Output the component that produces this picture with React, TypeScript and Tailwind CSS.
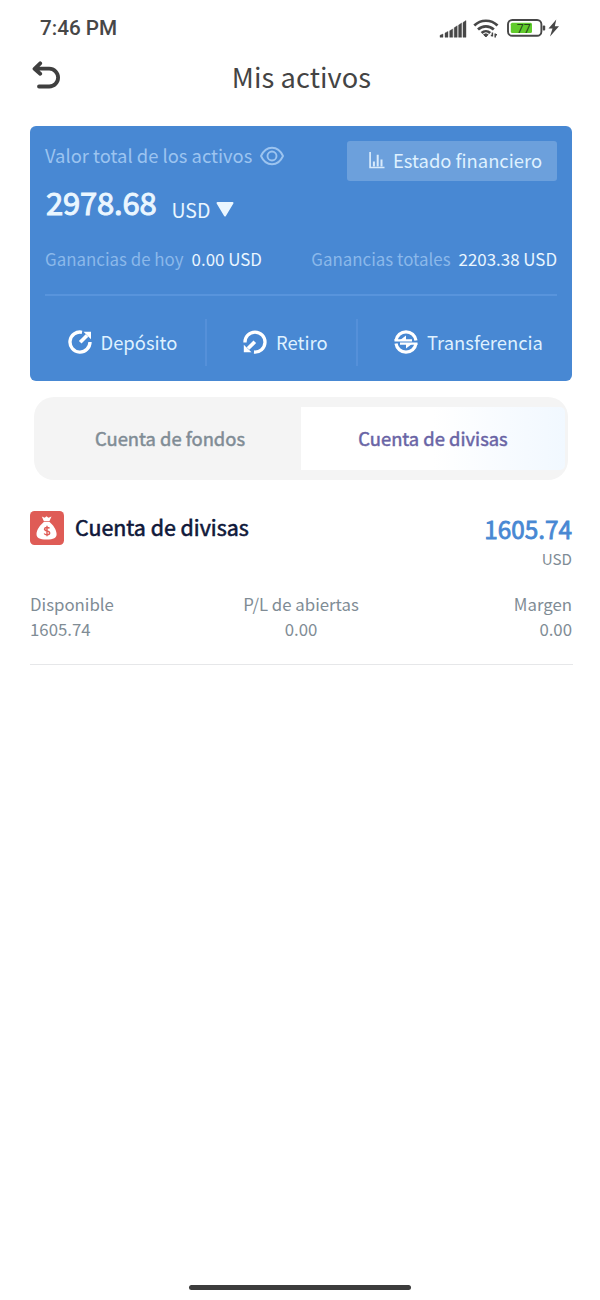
import React from "react";

function StatusIcons() {
  return (
    <svg width="122" height="24" viewBox="0 0 122 24" className="block">
      <path d="M1 20.300l3-1.300v3.300H1zM6 18l3-1.600v5.900H6zM10.700 15.800l3-1.800v8.300h-3zM15.200 12.800l3-2v11.500h-3zM19.600 10l3-2v14.300h-3zM24 7.500l3-2v16.800h-3z" fill="#474747" stroke="#474747" strokeWidth=".4" />
      <g fill="none" stroke="#474747" strokeWidth="2.700">
        <path d="M35.3 10.500a16.5 16.5 0 0 1 23.2 0" />
        <path d="M39 14.500a11.3 11.3 0 0 1 15.8 0" />
        <path d="M42.6 17.900a6.4 6.4 0 0 1 8.6 0" />
      </g>
      <path d="M44.6 19.600q2.3-1.500 4.500 0l-2.200 2.400z" fill="#474747" stroke="#474747" />
      <path d="M53.4 17.600v4M56.2 18.600v4M51.8 20.400h1.6M56.2 19.800h1.8" stroke="#474747" strokeWidth="1.5" />
      <rect x="69" y="5" width="33.4" height="15.8" rx="4.3" fill="none" stroke="#474747" strokeWidth="1.9" />
      <rect x="71.8" y="7.8" width="21.2" height="10.2" rx="1.5" fill="#61cb2c" />
      <rect x="103.7" y="10.500" width="2.500" height="5" rx="1" fill="#474747" />
      <text x="77.7" y="17.500" fontSize="12.5" fontWeight="400" fontFamily="Roboto, sans-serif" fill="#24451b" textLength="14">77</text>
      <path d="M117.300 4.500l-7.800 9h4l-2.500 8 9-10.200h-4.200z" fill="#474747" />
    </svg>
  );
}

function BackIcon() {
  return (
    <svg width="30" height="30" viewBox="0 0 30 30" className="block" fill="none" stroke="#3f3f3f" strokeWidth="3.8" strokeLinecap="round" strokeLinejoin="round">
      <path d="M9.200 2.300L3.500 7.800l5.700 5M4.200 7.700h14a8.900 8.900 0 0 1 0 17.800H8" />
    </svg>
  );
}

function EyeIcon() {
  return (
    <svg width="24" height="20" viewBox="0 0 24 20" className="block" fill="none" stroke="#9cc4f0" strokeWidth="1.9">
      <path d="M1 10C3.500 4.500 7.500 1.700 12 1.700S20.500 4.500 23 10C20.500 15.500 16.500 18.300 12 18.300S3.500 15.500 1 10z" strokeLinejoin="round" />
      <circle cx="12" cy="10" r="4.500" />
    </svg>
  );
}

function ChartIcon() {
  return (
    <svg width="16" height="17" viewBox="0 0 16 17" className="block" fill="none" stroke="#d8eafb">
      <path d="M1.100 0v15.500h14.400" strokeWidth="1.700" />
      <path d="M4.900 9.500v5M8.700 2.800v11.700M12.500 7.500v7" strokeWidth="2" />
    </svg>
  );
}

function DepositIcon() {
  return (
    <svg width="24" height="24" viewBox="0 0 24 24" className="block" fill="none" stroke="#fff">
      <path d="M14 2.300A10 10 0 1 0 22 12" strokeWidth="3.400" />
      <path d="M12.200 12.200l6.800-6.700" strokeWidth="3.700" />
      <path d="M15.500 1.800H23v7.500z" fill="#fff" stroke="none" />
    </svg>
  );
}

function WithdrawIcon() {
  return (
    <svg width="24" height="24" viewBox="0 0 24 24" className="block" fill="none" stroke="#fff">
      <path d="M2 12.500A10 10 0 1 1 11 22" strokeWidth="3.300" />
      <path d="M11.800 11.800l-6.800 6.700" strokeWidth="3.700" />
      <path d="M8.500 22.200H.8v-7.500z" fill="#fff" stroke="none" />
    </svg>
  );
}

function TransferIcon() {
  return (
    <svg width="24" height="24" viewBox="0 0 24 24" className="block" fill="none" stroke="#fff">
      <path d="M2 10.500A10.100 10.100 0 0 1 22 10.500M2 13.500A10.100 10.100 0 0 0 22 13.500" strokeWidth="3.200" />
      <path d="M.5 10.300h17.500M6 13.700h17.500" strokeWidth="2.200" />
      <path d="M5.500 10.500L12 5.500v5zM18.500 13.500L12 18.500v-5z" fill="#fff" stroke="none" />
    </svg>
  );
}

function MoneyBag() {
  return (
    <svg width="34" height="34" viewBox="0 0 34 34" className="block shrink-0">
      <rect width="34" height="34" rx="4.500" fill="#df5c56" />
      <path d="M11.800 5.600l2.900 1.100 1.800-1.500 1.900 1.500 3.100-1.200-2.100 4.700h-5.500z" fill="#fff" />
      <path d="M13.800 10.900h5.800c3.300 2.800 7 7.500 7 12.200 0 4.100-2.900 5.500-10 5.500S6.500 27.200 6.500 23.100c0-4.700 4-9.400 7.300-12.200z" fill="#fff" />
      <path d="M19.500 17.400c-.6-1.100-4.800-1.500-5 .6-.2 2.500 5.200 1.300 5.200 4 0 2.200-4.500 2.200-5.500.5M17 14.800v10.500" fill="none" stroke="#df5c56" strokeWidth="1.400" />
    </svg>
  );
}

const stats = [
  { label: "Disponible", value: "1605.74", align: "text-left" },
  { label: "P/L de abiertas", value: "0.00", align: "text-center" },
  { label: "Margen", value: "0.00", align: "text-right" },
];

export default function App() {
  return (
    <div className="flex h-[1300px] w-[600px] flex-col overflow-hidden bg-white whitespace-nowrap font-['Noto_Sans_CJK_SC','Noto_Sans',sans-serif]">
      <div className="flex h-[54px] shrink-0 items-center justify-between pr-[39px] pl-10">
        <span className="pt-[2px] font-[Roboto,sans-serif] text-[20.700px] leading-none font-medium text-[#474747]">7:46 PM</span>
        <StatusIcons />
      </div>

      <header className="grid h-[43px] shrink-0 grid-cols-[1fr_auto_1fr] items-center pr-[28px] pl-[31px]">
        <BackIcon />
        <h1 className="text-[27.200px] leading-[40px] tracking-[0.1px] text-[#444]">Mis activos</h1>
      </header>

      <section className="mt-[28.5px] ml-[30px] flex h-[255.500px] w-[542px] shrink-0 flex-col rounded-[6px] bg-[#4888d3] px-[15px] pt-[15px]">
        <div className="flex h-[74px] justify-between">
          <div>
            <div className="flex h-[30px] items-center gap-[8px]">
              <span className="pb-[2px] text-[18.400px] leading-[28px] text-[#9cc4f0]">Valor total de los activos</span>
              <EyeIcon />
            </div>
            <div className="flex h-[44px] items-baseline pt-[7px] pl-px text-[#eaf6ff]">
              <span className="text-[31px] leading-[48px] tracking-[-0.2px] [-webkit-text-stroke:1px_#eaf6ff]">2978.68</span>
              <div className="ml-[15px] flex translate-y-[2px] items-baseline">
                <span className="translate-y-px text-[19.500px] leading-[30px]">USD</span>
                <svg width="18" height="15" viewBox="0 0 18 15" className="ml-[6px] block">
                  <path d="M1.500 1h15L9 13.500z" fill="#eaf6ff" stroke="#eaf6ff" strokeWidth="2" strokeLinejoin="round" />
                </svg>
              </div>
            </div>
          </div>
          <button className="flex h-[40px] w-[210px] items-center rounded-[3px] bg-[#6ca0dc] pl-[22px] text-[18.400px] leading-[38px] text-[#dff1ff]">
            <ChartIcon />
            <span className="ml-[8px] pb-px">Estado financiero</span>
          </button>
        </div>

        <div className="mt-[29px] flex h-[30px] items-center justify-between pt-px text-[16.900px] leading-[30px] text-[#eaf6ff]">
          <span><span className="mr-[8px] text-[#8bb8ea]">Ganancias de hoy</span>0.00 USD</span>
          <span><span className="mr-[8px] text-[#8bb8ea]">Ganancias totales</span>2203.38 USD</span>
        </div>

        <div className="mt-[20px] h-[2px] shrink-0 bg-[#5894dc]" />

        <div className="-mx-[15px] mt-[23px] flex h-[47px] items-center text-[18.400px] leading-[46px] text-[#dff1ff]">
          <div className="flex h-full w-[177px] items-center gap-[8.500px] border-r-2 border-[#5590d9] pl-[38px]"><DepositIcon /><span>Depósito</span></div>
          <div className="flex h-full w-[151px] items-center gap-[9px] border-r-2 border-[#5590d9] pl-[36px]"><WithdrawIcon /><span>Retiro</span></div>
          <div className="flex h-full items-center gap-[9px] pl-[36px]"><TransferIcon /><span>Transferencia</span></div>
        </div>
      </section>

      <div className="mt-[16px] ml-[34px] flex h-[83px] w-[534px] shrink-0 items-center overflow-hidden rounded-[20px] bg-[#f4f4f4] pr-[3px] text-[18.400px]">
        <div className="flex h-[63px] w-[267px] items-center justify-center pl-[5px] text-[#808c95] [-webkit-text-stroke:0.5px_#808c95]">Cuenta de fondos</div>
        <div className="flex h-[63px] w-[264px] items-center justify-center rounded-r-[5px] bg-gradient-to-r from-white from-50% to-[#f1f8ff] text-[#6964a5] [-webkit-text-stroke:0.5px_#6964a5]">Cuenta de divisas</div>
      </div>

      <section className="ml-[30px] flex h-[185px] w-[543px] shrink-0 flex-col border-b border-[#e6e7e9] pt-[31px]">
        <div className="flex h-[81px] justify-between pr-px">
          <div className="flex h-[34px] items-center">
            <MoneyBag />
            <span className="ml-[11px] pb-[2px] text-[21.400px] leading-[32px] text-[#10183a] [-webkit-text-stroke:0.6px_#10183a]">Cuenta de divisas</span>
          </div>
          <div className="flex flex-col items-end">
            <span className="text-[24.300px] leading-[35px] text-[#4888d3] [-webkit-text-stroke:0.8px_#4888d3]">1605.74</span>
            <span className="text-[15.200px] leading-[24px] text-[#808c95]">USD</span>
          </div>
        </div>
        <div className="grid grid-cols-3 pr-px text-[16.800px] text-[#808c95]">
          {stats.map((s) => (
            <div key={s.label} className={s.align}>
              <div className="leading-[25px]">{s.label}</div>
              <div className="leading-[24px]">{s.value}</div>
            </div>
          ))}
        </div>
      </section>

      <div className="mt-auto mb-[10px] h-[5px] w-[222px] shrink-0 self-center rounded-full bg-[#3c3c3c]" />
    </div>
  );
}
